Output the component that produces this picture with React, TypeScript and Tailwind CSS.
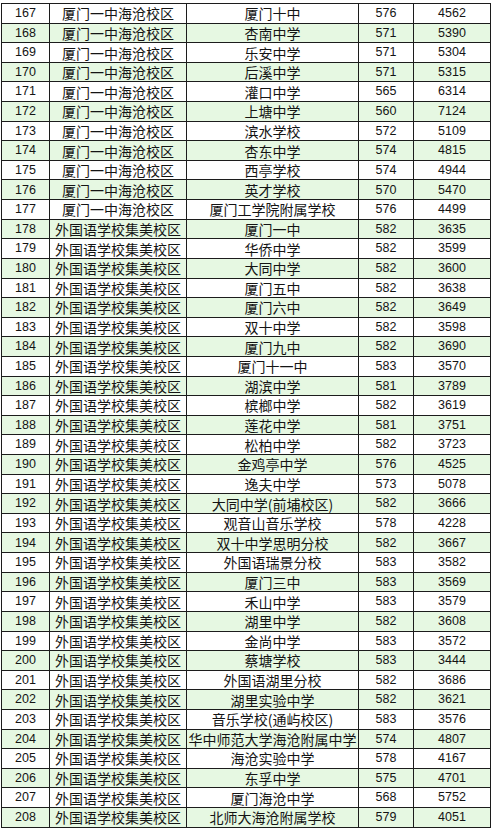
const rows: [number, string, string, number, number][] = [
  [167, "厦门一中海沧校区", "厦门十中", 576, 4562],
  [168, "厦门一中海沧校区", "杏南中学", 571, 5390],
  [169, "厦门一中海沧校区", "乐安中学", 571, 5304],
  [170, "厦门一中海沧校区", "后溪中学", 571, 5315],
  [171, "厦门一中海沧校区", "灌口中学", 565, 6314],
  [172, "厦门一中海沧校区", "上塘中学", 560, 7124],
  [173, "厦门一中海沧校区", "滨水学校", 572, 5109],
  [174, "厦门一中海沧校区", "杏东中学", 574, 4815],
  [175, "厦门一中海沧校区", "西亭学校", 574, 4944],
  [176, "厦门一中海沧校区", "英才学校", 570, 5470],
  [177, "厦门一中海沧校区", "厦门工学院附属学校", 576, 4499],
  [178, "外国语学校集美校区", "厦门一中", 582, 3635],
  [179, "外国语学校集美校区", "华侨中学", 582, 3599],
  [180, "外国语学校集美校区", "大同中学", 582, 3600],
  [181, "外国语学校集美校区", "厦门五中", 582, 3638],
  [182, "外国语学校集美校区", "厦门六中", 582, 3649],
  [183, "外国语学校集美校区", "双十中学", 582, 3598],
  [184, "外国语学校集美校区", "厦门九中", 582, 3690],
  [185, "外国语学校集美校区", "厦门十一中", 583, 3570],
  [186, "外国语学校集美校区", "湖滨中学", 581, 3789],
  [187, "外国语学校集美校区", "槟榔中学", 582, 3619],
  [188, "外国语学校集美校区", "莲花中学", 581, 3751],
  [189, "外国语学校集美校区", "松柏中学", 582, 3723],
  [190, "外国语学校集美校区", "金鸡亭中学", 576, 4525],
  [191, "外国语学校集美校区", "逸夫中学", 573, 5078],
  [192, "外国语学校集美校区", "大同中学(前埔校区)", 582, 3666],
  [193, "外国语学校集美校区", "观音山音乐学校", 578, 4228],
  [194, "外国语学校集美校区", "双十中学思明分校", 582, 3667],
  [195, "外国语学校集美校区", "外国语瑞景分校", 583, 3582],
  [196, "外国语学校集美校区", "厦门三中", 583, 3569],
  [197, "外国语学校集美校区", "禾山中学", 583, 3579],
  [198, "外国语学校集美校区", "湖里中学", 582, 3608],
  [199, "外国语学校集美校区", "金尚中学", 583, 3572],
  [200, "外国语学校集美校区", "蔡塘学校", 583, 3444],
  [201, "外国语学校集美校区", "外国语湖里分校", 582, 3686],
  [202, "外国语学校集美校区", "湖里实验中学", 582, 3621],
  [203, "外国语学校集美校区", "音乐学校(通屿校区)", 583, 3576],
  [204, "外国语学校集美校区", "华中师范大学海沧附属中学", 574, 4807],
  [205, "外国语学校集美校区", "海沧实验中学", 578, 4167],
  [206, "外国语学校集美校区", "东孚中学", 575, 4701],
  [207, "外国语学校集美校区", "厦门海沧中学", 568, 5752],
  [208, "外国语学校集美校区", "北师大海沧附属学校", 579, 4051],
];

const cjk = "font-['Noto_Sans_CJK_SC',sans-serif] text-[14px]";
const num = "font-['Liberation_Sans',Arial,sans-serif] text-[12.5px]";

export default function App() {
  return (
    <div className="min-h-[831px] w-[493px] bg-white pl-[1px] pt-[3px] text-[#141414]">
      <div className="w-[490px] border-l border-t border-[#1c1c1c]">
        {rows.map(([no, from, school, score, rank]) => (
          <div
            key={no}
            className={`box-border flex h-[19.62px] border-b border-[#1c1c1c] leading-none ${
              no % 2 === 0 ? "bg-[#e6f8e2]" : "bg-white"
            }`}
          >
            <div className={`flex w-[48px] items-center justify-center border-r border-[#1c1c1c] ${num}`}>
              {no}
            </div>
            <div className={`flex w-[137px] items-center justify-center border-r border-[#1c1c1c] ${cjk}`}>
              {from}
            </div>
            <div className={`flex w-[172px] items-center justify-center whitespace-nowrap border-r border-[#1c1c1c] ${cjk}`}>
              {school}
            </div>
            <div className={`flex w-[55px] items-center justify-center border-r border-[#1c1c1c] ${num}`}>
              {score}
            </div>
            <div className={`flex w-[77px] items-center justify-center border-r border-[#1c1c1c] ${num}`}>
              {rank}
            </div>
          </div>
        ))}
      </div>
    </div>
  );
}
